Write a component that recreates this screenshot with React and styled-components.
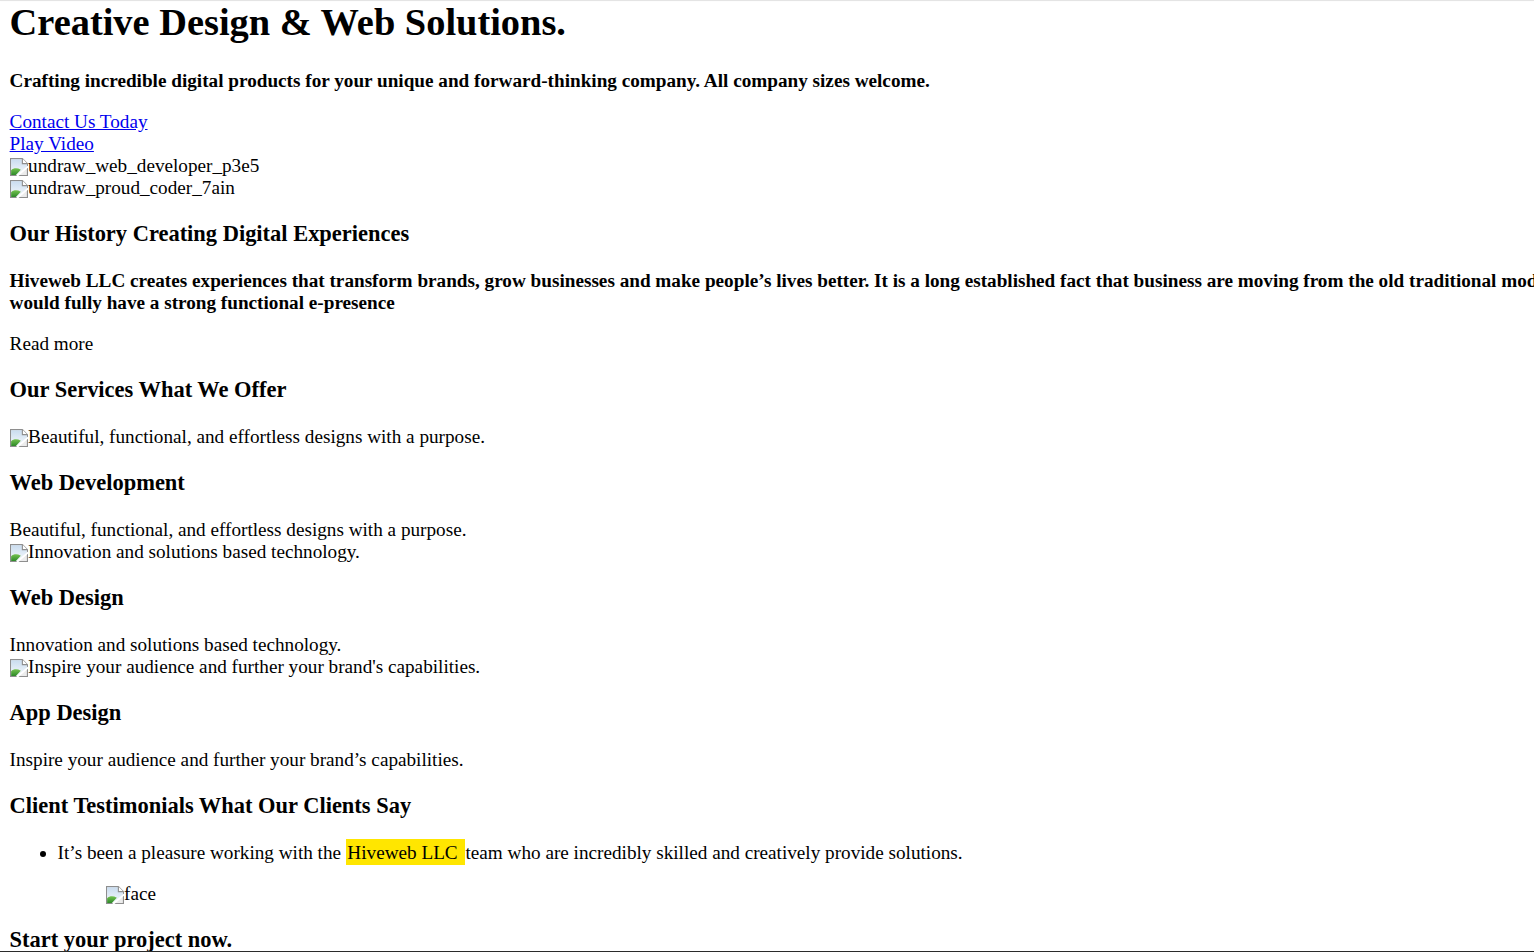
import React from "react";
import styled, { createGlobalStyle } from "styled-components";

const GlobalStyle = createGlobalStyle`
  html, body {
    overflow-x: hidden;
  }
  body {
    margin: 0;
    padding: 0 9.6px;
    background: #ffffff;
    color: #000000;
    font-family: "Liberation Serif", "Times New Roman", serif;
    font-size: 19.2px;
    line-height: normal;
  }
`;

const TopShade = styled.div`
  position: fixed;
  top: 0;
  left: 0;
  right: 0;
  height: 1px;
  background: #e4e4e4;
  box-shadow: 0 0 1px rgba(0, 0, 0, 0.08);
  pointer-events: none;
`;

const BottomEdge = styled.div`
  position: fixed;
  bottom: 0;
  left: 0;
  right: 0;
  height: 1.5px;
  background: #2b2b2b;
  pointer-events: none;
`;

const Page = styled.main`
  display: block;
`;

const Title = styled.h1`
  font-size: 38.4px;
  font-weight: bold;
  margin: 0 0 25.7px;
`;

const Para = styled.p`
  margin: ${(p) => (p.$flush ? "0" : "19.2px 0")};
  font-weight: ${(p) => (p.$bold ? "bold" : "normal")};
  white-space: ${(p) => (p.$nowrap ? "nowrap" : "normal")};
`;

const LinkStack = styled.div`
  display: flex;
  flex-direction: column;
  align-items: flex-start;
`;

const TextLink = styled.a`
  color: #0000ee;
  text-decoration: underline;
  cursor: pointer;
`;

const ImageLine = styled.div`
  display: block;
`;

const BrokenImg = styled.span`
  display: inline;
  white-space: nowrap;
`;

const BrokenIcon = styled.svg`
  width: 18px;
  height: 18px;
  vertical-align: -4px;
  margin-right: 0.5px;
`;

const SectionTitle = styled.h3`
  font-size: 22.46px;
  font-weight: bold;
  margin: 22.46px 0;
`;

const Plain = styled.div`
  display: block;
`;

const List = styled.ul`
  margin: 19.2px 0;
  padding-left: 48px;
  list-style: disc;
`;

const Item = styled.li`
  display: list-item;
`;

const Highlight = styled.span`
  background: #ffe600;
  padding: 2.6px 3px 2.6px 1.5px;
`;

const Quote = styled.blockquote`
  margin: 19.2px 48px;
`;

function BrokenImage({ alt }) {
  const id = React.useId().replace(/:/g, "");
  return (
    <BrokenImg>
      <BrokenIcon viewBox="0 0 16 16" aria-hidden="true">
        <defs>
          <linearGradient id={`sky${id}`} x1="0" y1="0" x2="0" y2="1">
            <stop offset="0" stopColor="#c9dcef" />
            <stop offset="1" stopColor="#f6f9fc" />
          </linearGradient>
          <linearGradient id={`hill${id}`} x1="0" y1="0" x2="0" y2="1">
            <stop offset="0" stopColor="#74c24f" />
            <stop offset="1" stopColor="#2f8a2a" />
          </linearGradient>
        </defs>
        <path d="M0.5 0.5H11L15.5 5V15.5H0.5Z" fill="#ececec" stroke="#8e8e8e" />
        <path d="M1 1H10.6V5.4H15V8.2L7.2 15H1Z" fill={`url(#sky${id})`} />
        <path d="M1 15V10.8C3.2 8.8 6.4 8.6 9.6 10.4L5.2 15Z" fill={`url(#hill${id})`} />
        <path d="M6.2 16.2L16.2 7.4" stroke="#ffffff" strokeWidth="1.5" />
        <path d="M11 0.5V5H15.5" fill="#ffffff" stroke="#8e8e8e" />
      </BrokenIcon>
      {alt}
    </BrokenImg>
  );
}

export default function App() {
  return (
    <>
      <GlobalStyle />
      <TopShade />
      <Page>
        <section>
          <Title>Creative Design &amp; Web Solutions.</Title>
          <Para $bold>
            Crafting incredible digital products for your unique and
            forward-thinking company. All company sizes welcome.
          </Para>
          <LinkStack>
            <TextLink href="#contact">Contact Us Today</TextLink>
            <TextLink href="#video">Play Video</TextLink>
          </LinkStack>
          <ImageLine>
            <BrokenImage alt="undraw_web_developer_p3e5" />
          </ImageLine>
          <ImageLine>
            <BrokenImage alt="undraw_proud_coder_7ain" />
          </ImageLine>
        </section>

        <section>
          <SectionTitle>Our History Creating Digital Experiences</SectionTitle>
          <Para $bold $nowrap>
            Hiveweb LLC creates experiences that transform brands, grow
            businesses and make people’s lives better. It is a long established
            fact that business are moving from the old traditional models to
            digital models where every business
            <br />
            would fully have a strong functional e-presence
          </Para>
          <Plain>Read more</Plain>
        </section>

        <section>
          <SectionTitle>Our Services What We Offer</SectionTitle>
          <ImageLine>
            <BrokenImage alt="Beautiful, functional, and effortless designs with a purpose." />
          </ImageLine>
          <SectionTitle>Web Development</SectionTitle>
          <Plain>Beautiful, functional, and effortless designs with a purpose.</Plain>
          <ImageLine>
            <BrokenImage alt="Innovation and solutions based technology." />
          </ImageLine>
          <SectionTitle>Web Design</SectionTitle>
          <Plain>Innovation and solutions based technology.</Plain>
          <ImageLine>
            <BrokenImage alt="Inspire your audience and further your brand's capabilities." />
          </ImageLine>
          <SectionTitle>App Design</SectionTitle>
          <Plain>Inspire your audience and further your brand’s capabilities.</Plain>
        </section>

        <section>
          <SectionTitle>Client Testimonials What Our Clients Say</SectionTitle>
          <List>
            <Item>
              It’s been a pleasure working with the{" "}
              <Highlight>Hiveweb LLC </Highlight>team who are incredibly skilled
              and creatively provide solutions.
              <Quote>
                <BrokenImage alt="face" />
              </Quote>
            </Item>
          </List>
        </section>

        <section>
          <SectionTitle>Start your project now.</SectionTitle>
        </section>
      </Page>
      <BottomEdge />
    </>
  );
}
